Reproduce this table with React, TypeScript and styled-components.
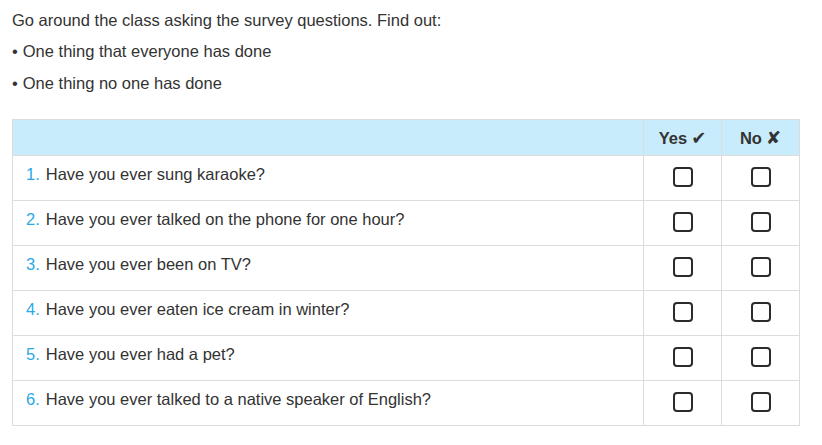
import * as React from 'react'
import styled, { createGlobalStyle } from 'styled-components'

const GlobalStyle = createGlobalStyle`
  html, body {
    margin: 0;
    padding: 0;
    background: #fff;
  }
  body {
    font-family: Arial, "Liberation Sans", Helvetica, sans-serif;
    color: #333;
  }
`

const Page = styled.div`
  padding: 10px 12px 0 12px;
  width: 788px;
`

const Intro = styled.p`
  margin: 0 0 11px 0;
  font-size: 16.5px;
  line-height: 20px;
`

const Bullets = styled.ul`
  list-style: none;
  margin: 0 0 26px 0;
  padding: 0;
`

const Bullet = styled.li`
  font-size: 16.5px;
  line-height: 20px;
  margin-bottom: 12px;
  &::before {
    content: '•';
    margin-right: 5px;
  }
  &:last-child {
    margin-bottom: 0;
  }
`

const Table = styled.table`
  width: 100%;
  border-collapse: collapse;
  font-size: 16.5px;
`

const HeadCell = styled.th<{ $narrow?: boolean }>`
  background: #c8ecfb;
  border: 1px solid #dcdcdc;
  height: 35px;
  padding: 0;
  font-weight: bold;
  text-align: center;
  width: ${({ $narrow }) => ($narrow ? '77px' : 'auto')};
`

const QuestionCell = styled.td`
  border: 1px solid #dcdcdc;
  height: 36px;
  padding: 0 0 8px 13px;
  vertical-align: middle;
`

const Num = styled.span`
  color: #2aa8e6;
  margin-right: 6px;
`

const BoxCell = styled.td`
  border: 1px solid #dcdcdc;
  text-align: center;
  vertical-align: middle;
  padding: 0 0 3px 0;
  line-height: 0;
`

const Box = styled.span`
  display: inline-block;
  width: 16px;
  height: 16px;
  border: 2px solid #2b2b2b;
  border-radius: 4px;
`

const Mark = styled.span`
  font-family: "DejaVu Sans", sans-serif;
  font-weight: bold;
  font-size: 18px;
  margin-left: 4px;
`

const questions = [
  'Have you ever sung karaoke?',
  'Have you ever talked on the phone for one hour?',
  'Have you ever been on TV?',
  'Have you ever eaten ice cream in winter?',
  'Have you ever had a pet?',
  'Have you ever talked to a native speaker of English?',
]

export default function App() {
  return (
    <Page>
      <GlobalStyle />
      <Intro>Go around the class asking the survey questions. Find out:</Intro>
      <Bullets>
        <Bullet>One thing that everyone has done</Bullet>
        <Bullet>One thing no one has done</Bullet>
      </Bullets>
      <Table>
        <thead>
          <tr>
            <HeadCell />
            <HeadCell $narrow>
              Yes<Mark>✔</Mark>
            </HeadCell>
            <HeadCell $narrow>
              No<Mark>✘</Mark>
            </HeadCell>
          </tr>
        </thead>
        <tbody>
          {questions.map((q, i) => (
            <tr key={i}>
              <QuestionCell>
                <Num>{i + 1}.</Num>
                {q}
              </QuestionCell>
              <BoxCell>
                <Box />
              </BoxCell>
              <BoxCell>
                <Box />
              </BoxCell>
            </tr>
          ))}
        </tbody>
      </Table>
    </Page>
  )
}
